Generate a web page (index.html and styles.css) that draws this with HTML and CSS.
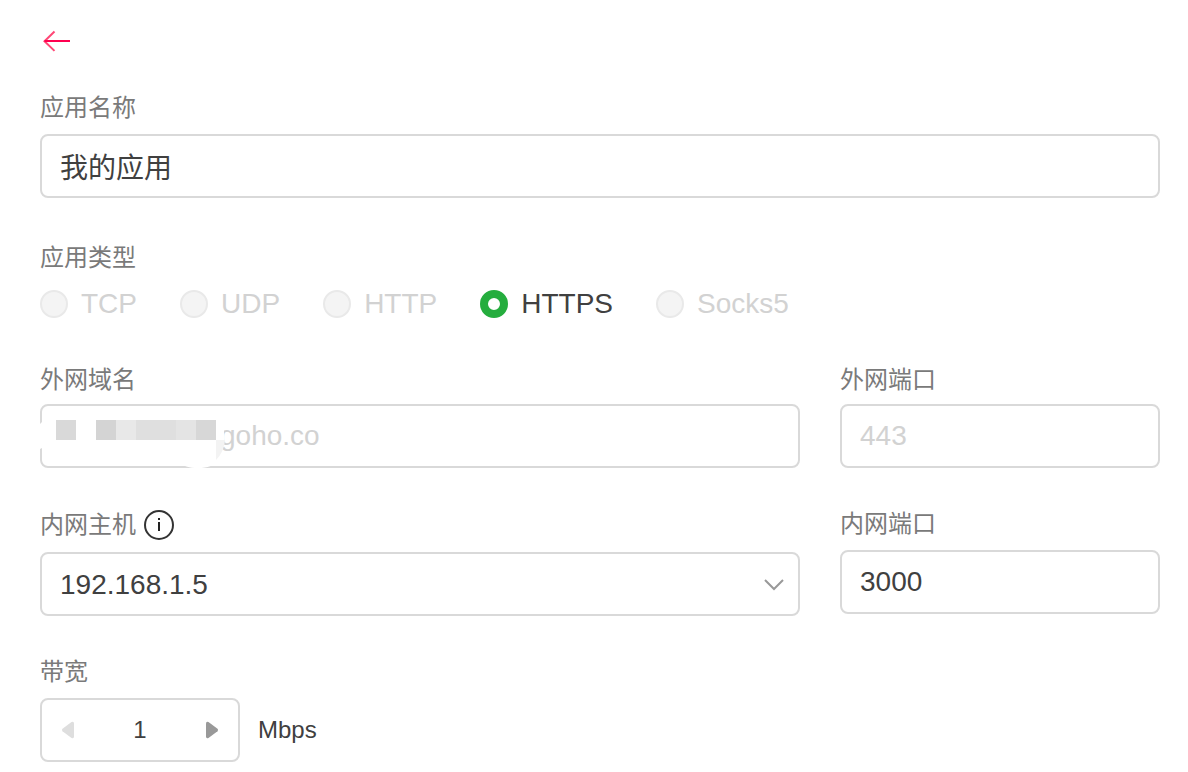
FILE: index.html
```html
<!DOCTYPE html>
<html lang="zh-CN">

<head>
    <meta charset="UTF-8">
    <meta name="viewport" content="width=device-width, initial-scale=1.0">
    <title>我的应用</title>
    <link rel="stylesheet" href="styles.css">
</head>

<body>
    <form class="page">
        <a class="back" href="#" aria-label="返回">
            <svg width="32" height="22" viewBox="0 0 32 22" fill="none" stroke-width="2">
                <path d="M14.5 1.500L4.500 11.200l10 9.700" stroke="#ff4776"/>
                <path d="M4.500 11h25.500" stroke="#ff0050"/>
            </svg>
        </a>

        <div class="field">
            <label class="title" for="name">应用名称</label>
            <input class="box" id="name" type="text" value="我的应用">
        </div>

        <fieldset class="types">
            <legend class="title">应用类型</legend>
            <div class="radios">
                <label class="radio"><input type="radio" name="type" disabled>TCP</label>
                <label class="radio"><input type="radio" name="type" disabled>UDP</label>
                <label class="radio"><input type="radio" name="type" disabled>HTTP</label>
                <label class="radio"><input type="radio" name="type" checked>HTTPS</label>
                <label class="radio"><input type="radio" name="type" disabled>Socks5</label>
            </div>
        </fieldset>

        <div class="row outer">
            <div class="field">
                <label class="title" for="domain">外网域名</label>
                <div class="domain">
                    <input class="box" id="domain" type="text" value="goho.co" disabled>
                    <!-- 域名前缀打码 -->
                    <svg class="mosaic" width="190" height="64" viewBox="0 0 190 64">
                        <path d="M0 20l2-2h176l6 8v10q0 12-8 20c-2 6-8 8-18 8s-13-2-16-4L2 44l-2 1z" fill="#fff"/>
                        <path d="M16 16h20v20H16z" fill="#d9d9d9"/>
                        <path d="M56 16h20v20H56z" fill="#d4d4d4"/>
                        <path d="M76 16h20v20H76z" fill="#e8e8e8"/>
                        <path d="M96 16h40v20H96z" fill="#dfdfdf"/>
                        <path d="M136 16h20v20h-20z" fill="#e4e4e4"/>
                        <path d="M156 16h20v20h-20z" fill="#d7d7d7"/>
                        <path d="M176 36h9q-1 12-9 20z" fill="#f3f3f3"/>
                    </svg>
                </div>
            </div>
            <div class="field">
                <label class="title" for="outer-port">外网端口</label>
                <input class="box" id="outer-port" type="text" value="443" disabled>
            </div>
        </div>

        <div class="row inner">
            <div class="field">
                <div class="host-title">
                    <label class="title" for="host">内网主机</label>
                    <svg width="30" height="30" viewBox="0 0 30 30">
                        <circle cx="15" cy="15" r="14" fill="none" stroke="#333" stroke-width="2"/>
                        <path d="M14 8h2v2h-2zM14 12h2v9h-2z" fill="#222"/>
                    </svg>
                </div>
                <div class="select">
                    <select class="box" id="host">
                        <option>192.168.1.5</option>
                    </select>
                    <svg width="20" height="12" viewBox="0 0 20 12" fill="none" stroke="#999" stroke-width="2">
                        <path d="M1 1l9 9 9-9"/>
                    </svg>
                </div>
            </div>
            <div class="field">
                <label class="title" for="inner-port">内网端口</label>
                <input class="box" id="inner-port" type="text" value="3000">
            </div>
        </div>

        <div class="field">
            <label class="title" for="band">带宽</label>
            <div class="band">
                <div class="stepper">
                    <button type="button" aria-label="减少" disabled>
                        <svg width="12" height="18" viewBox="0 0 12 18" fill="#dedede">
                            <path d="M9.500 1L.5 7.800q-1 1.200 0 2.400L9.500 17q2.500 1 2.500-1.500v-13Q12 0 9.500 1z"/>
                        </svg>
                    </button>
                    <input id="band" type="text" value="1">
                    <button type="button" aria-label="增加">
                        <svg width="12" height="18" viewBox="0 0 12 18" fill="#999">
                            <path d="M2.500 1l9 6.800q1 1.200 0 2.400L2.500 17Q0 18 0 15.500v-13Q0 0 2.500 1z"/>
                        </svg>
                    </button>
                </div>
                <span>Mbps</span>
            </div>
        </div>
    </form>
</body>

</html>
```

FILE: styles.css
```css
* {
    margin: 0;
    padding: 0;
    box-sizing: border-box;
}

body,
input,
select,
button {
    font-family: "Liberation Sans", "Noto Sans CJK SC", sans-serif;
    color: #404040;
}

body {
    background: #fff;
}

.page {
    padding: 30px 28px 10px 40px;
}

.back {
    display: block;
    width: 32px;
    height: 22px;
    margin-bottom: 38px;
}

svg {
    display: block;
}

.field {
    display: flex;
    flex-direction: column;
    gap: 8px;
}

.title {
    display: block;
    font-size: 24px;
    line-height: 36px;
    color: #7a7a7a;
}

.box {
    display: block;
    width: 100%;
    height: 64px;
    padding: 0 18px;
    border: 2px solid #d9d9d9;
    border-radius: 8px;
    background: #fff;
    font-size: 28px;
    outline: none;
}

.box:disabled {
    color: #d2d2d2;
}

.types {
    border: none;
    margin-top: 42px;
}

.radios {
    display: flex;
    gap: 43px;
    margin-top: 14px;
}

.radio {
    display: flex;
    align-items: center;
    gap: 13px;
    font-size: 28px;
    line-height: 28px;
}

.radio input {
    appearance: none;
    width: 28px;
    height: 28px;
    border: 8px solid #25ad3e;
    border-radius: 50%;
    background: #fff;
}

.radio input:disabled {
    border: 2px solid #e9e9e9;
    background: #f4f4f4;
}

.radio:has(input:disabled) {
    color: #d2d2d2;
}

.row {
    display: grid;
    grid-template-columns: 1fr 320px;
    gap: 40px;
}

.outer {
    margin-top: 44px;
}

.outer .field {
    gap: 6px;
}

.inner {
    margin: 38px 0;
}

.domain {
    position: relative;
}

.domain .box {
    padding-left: 178px;
}

.mosaic {
    position: absolute;
    left: 0;
    top: 0;
}

.host-title {
    display: flex;
    align-items: center;
    gap: 8px;
    height: 38px;
}

.select {
    position: relative;
}

.select .box {
    appearance: none;
}

.select svg {
    position: absolute;
    right: 16px;
    top: 27px;
    pointer-events: none;
}

.band {
    display: flex;
    align-items: center;
    gap: 18px;
    font-size: 24px;
}

.stepper {
    display: flex;
    width: 200px;
    height: 64px;
    border: 2px solid #d9d9d9;
    border-radius: 8px;
}

.stepper button {
    display: flex;
    align-items: center;
    justify-content: center;
    width: 52px;
    border: none;
    background: none;
}

.stepper input {
    flex: 1;
    min-width: 0;
    border: none;
    background: none;
    outline: none;
    text-align: center;
    font-size: 24px;
}
```
